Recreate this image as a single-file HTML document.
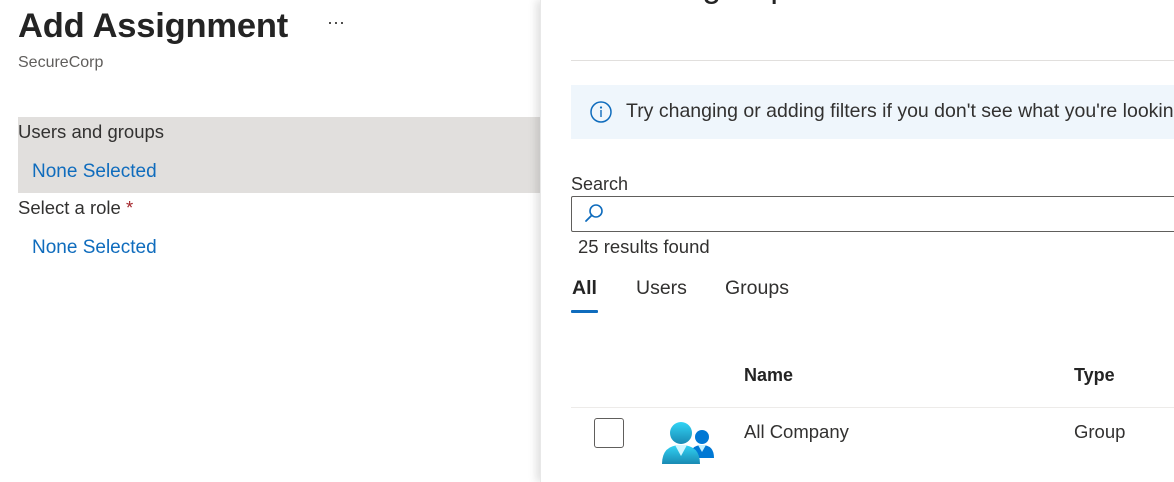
<!DOCTYPE html>
<html><head><style>
body{margin:0;width:1174px;height:482px;overflow:hidden;background:#fff;font-family:"Liberation Sans",sans-serif;position:relative;color:#323130}
.a{position:absolute;white-space:nowrap}
.link{color:#0f6cbd;font-size:19px}
</style></head><body>
<div class="a" style="left:18px;top:7px;font-size:34.5px;font-weight:bold;color:#242424;letter-spacing:-0.2px">Add Assignment</div>
<div class="a" style="left:327px;top:12px;font-size:18px;color:#323130">···</div>
<div class="a" style="left:18px;top:54px;font-size:16px;color:#605e5c">SecureCorp</div>
<div class="a" style="left:18px;top:117px;width:522px;height:76px;background:#e1dfdd"></div>
<div class="a" style="left:18px;top:121px;font-size:18.5px">Users and groups</div>
<div class="a link" style="left:32px;top:161px">None Selected</div>
<div class="a" style="left:18px;top:197px;font-size:18.5px">Select a role <span style="color:#a4262c">*</span></div>
<div class="a link" style="left:32px;top:237px">None Selected</div>

<div class="a" style="left:540px;top:0;width:634px;height:482px;background:#fff;box-shadow:-4px 0 8px rgba(0,0,0,0.12);border-left:1px solid #e8e8e8"></div>
<div class="a" style="left:570px;top:-33px;font-size:34px;color:#242424">Select a group</div>
<div class="a" style="left:571px;top:60px;width:603px;height:1px;background:#e1dfdd"></div>
<div class="a" style="left:571px;top:85px;width:603px;height:54px;background:#eff6fc"></div>
<svg class="a" style="left:589px;top:100px" width="24" height="24" viewBox="0 0 24 24"><circle cx="12" cy="12" r="10" fill="none" stroke="#0f6cbd" stroke-width="1.5"/><circle cx="12" cy="7.5" r="1.1" fill="#0f6cbd"/><rect x="11.3" y="10" width="1.4" height="7" fill="#0f6cbd"/></svg>
<div class="a" style="left:626px;top:100px;font-size:19.5px;color:#323130">Try changing or adding filters if you don't see what you're looking for.</div>
<div class="a" style="left:571px;top:174px;font-size:18px">Search</div>
<div class="a" style="left:571px;top:196px;width:610px;height:34px;border:1px solid #605e5c;border-radius:2px"></div>
<svg class="a" style="left:583px;top:202px" width="22" height="22" viewBox="0 0 22 22"><circle cx="13" cy="9" r="6" fill="none" stroke="#0f6cbd" stroke-width="1.6"/><line x1="8.8" y1="13.2" x2="3" y2="19" stroke="#0f6cbd" stroke-width="1.8" stroke-linecap="round"/></svg>
<div class="a" style="left:578px;top:236px;font-size:18.5px">25 results found</div>
<div class="a" style="left:572px;top:277px;font-size:19.5px;color:#242424;font-weight:bold">All</div>
<div class="a" style="left:571px;top:310px;width:27px;height:3px;background:#0f6cbd;border-radius:1px"></div>
<div class="a" style="left:636px;top:277px;font-size:19.5px">Users</div>
<div class="a" style="left:725px;top:277px;font-size:19.5px">Groups</div>
<div class="a" style="left:744px;top:365px;font-size:18px;font-weight:bold;color:#242424">Name</div>
<div class="a" style="left:1074px;top:365px;font-size:18px;font-weight:bold;color:#242424">Type</div>
<div class="a" style="left:571px;top:407px;width:603px;height:1px;background:#edebe9"></div>
<div class="a" style="left:594px;top:418px;width:28px;height:28px;border:1px solid #605e5c;border-radius:3px"></div>
<svg class="a" style="left:660px;top:420px" width="56" height="46" viewBox="0 0 56 46">
<defs><linearGradient id="g1" x1="0" y1="0" x2="0" y2="1"><stop offset="0" stop-color="#32d4f5"/><stop offset="1" stop-color="#198ab3"/></linearGradient></defs>
<circle cx="42" cy="17" r="7" fill="#0078d4"/><path d="M30 38 Q30 25 42 25 Q54 25 54 38 Z" fill="#0078d4"/>
<path d="M38 25 L42 32 L46 25 Z" fill="#c3f1ff"/>
<circle cx="21" cy="13" r="11" fill="url(#g1)"/><path d="M2 44 Q2 25 21 25 Q40 25 40 44 Z" fill="url(#g1)"/>
<path d="M15 25 L21 36 L27 25 Z" fill="#d2f6ff"/>
</svg>
<div class="a" style="left:744px;top:421px;font-size:18.5px">All Company</div>
<div class="a" style="left:1074px;top:421px;font-size:18.5px">Group</div>
</body></html>
